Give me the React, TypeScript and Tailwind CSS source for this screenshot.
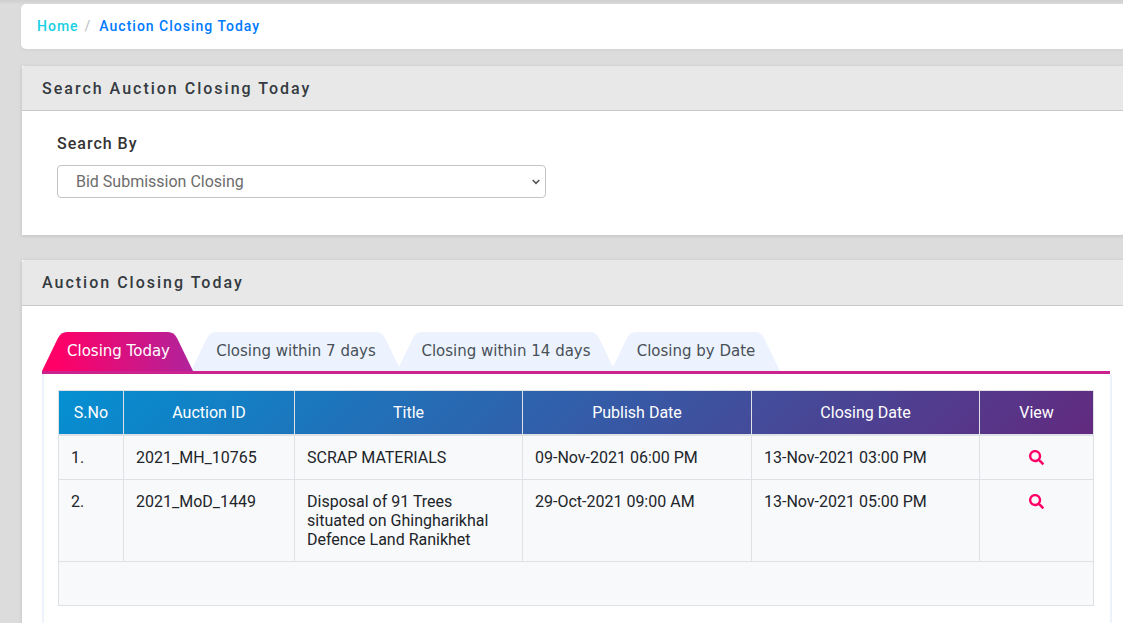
import { FaSearch } from 'react-icons/fa'

const tabs = [
  { label: 'Closing Today', width: 151, margin: 'ml-0 pl-[2px]', active: true },
  { label: 'Closing within 7 days', width: 210, margin: '-ml-[2px]', active: false },
  { label: 'Closing within 14 days', width: 218, margin: '-ml-[4px]', active: false },
  { label: 'Closing by Date', width: 169, margin: '-ml-[4px] pl-[1px]', active: false },
]

const rows = [
  { no: '1.', id: '2021_MH_10765', title: 'SCRAP MATERIALS', publish: '09-Nov-2021 06:00 PM', closing: '13-Nov-2021 03:00 PM' },
  {
    no: '2.',
    id: '2021_MoD_1449',
    title: 'Disposal of 91 Trees situated on Ghingharikhal Defence Land Ranikhet',
    publish: '29-Oct-2021 09:00 AM',
    closing: '13-Nov-2021 05:00 PM',
  },
]

function Tab({ label, width, margin, active }: { label: string; width: number; margin: string; active: boolean }) {
  const h = 39
  const d = `M0 ${h} L${16} 6 Q19 0 25 0 L${width - 25} 0 Q${width - 19} 0 ${width - 16} 6 L${width} ${h} Z`
  const gid = 'tab-grad-' + width
  return (
    <div
      className={`relative flex h-[39px] items-start justify-center pt-[8px] leading-[22px] ${margin} ${active ? 'z-10 text-white' : 'text-[#495057]'}`}
      style={{ width }}
    >
      <svg className="absolute inset-0" width={width} height={h} viewBox={`0 0 ${width} ${h}`}>
        <defs>
          <linearGradient id={gid} x1="0" y1="0" x2="1" y2="0">
            <stop offset="0.1" stopColor="#ff0066" />
            <stop offset="1" stopColor="#b0239c" />
          </linearGradient>
        </defs>
        <path d={d} fill={active ? `url(#${gid})` : '#ecf3fe'} />
      </svg>
      <span className="relative font-['DejaVu_Sans',sans-serif] text-[15px]">{label}</span>
    </div>
  )
}

export default function App() {
  return (
    <div className="h-[623px] w-[1123px] overflow-hidden bg-[#dcdcdc] font-['Roboto',sans-serif]">
      <div className="h-[4px] bg-gradient-to-b from-[#cfcfcf] to-[#dadada]" />
      <div className="ml-[21px] w-[1140px]">
        {/* breadcrumb */}
        <div className="flex h-[45px] items-center rounded-l-[5px] bg-white pl-[16px] text-[14px] font-medium tracking-[1px] shadow-[0_1px_3px_rgba(0,0,0,0.05)]">
          <span className="text-[#17d0e3]">Home</span>
          <span className="ml-[6px] font-normal text-[#b9bdc1]">/</span>
          <span className="ml-[8px] text-[#007bff]">Auction Closing Today</span>
        </div>

        {/* search card */}
        <div className="ml-px mt-[17px] h-[169px] bg-white shadow-[0_1px_4px_rgba(0,0,0,0.12)]">
          <div className="flex h-[45px] items-center rounded-tl-[3px] border-b border-[#c6cacd] bg-[#e8e8e8] pl-[20px] pt-[1px] text-[16px] font-medium tracking-[2px] text-[#343a40]">
            Search Auction Closing Today
          </div>
          <div className="pl-[35px] pt-[23px]">
            <div className="text-[16px] font-medium leading-[20px] tracking-[1px] text-[#333333]">Search By</div>
            <div className="relative mt-[11px] h-[33px] w-[489px]">
              <select className="h-[33px] w-full appearance-none rounded-[4px] border border-[#c4c4c4] bg-white pl-[18px] text-[16px] text-[#6c6c6c]">
                <option>Bid Submission Closing</option>
              </select>
              <svg className="pointer-events-none absolute left-[475px] top-[14px]" width="8" height="6" viewBox="0 0 8 6">
                <path d="M0.7 1 L4 4.4 L7.3 1" fill="none" stroke="#555555" strokeWidth="1.6" />
              </svg>
            </div>
          </div>
        </div>

        {/* results card */}
        <div className="ml-px mt-[25px] h-[400px] bg-white shadow-[0_1px_4px_rgba(0,0,0,0.12)]">
          <div className="flex h-[46px] items-center rounded-tl-[3px] border-b border-[#c6cacd] bg-[#e8e8e8] pl-[20px] text-[16px] font-medium tracking-[2px] text-[#343a40]">
            Auction Closing Today
          </div>
          <div className="pl-[20px] pt-[26px]">
            <div className="flex">
              {tabs.map((t) => (
                <Tab key={t.label} {...t} />
              ))}
            </div>
            <div className="h-[3px] w-[1068px] bg-[#cb2290]" />
            <div className="h-[300px] w-[1070px] border-x-[2px] border-x-[#eef3fb] pl-[14px] pt-[16px]">
              <table className="w-[1035px] table-fixed border-collapse border border-[#dee2e6] bg-[#f8f9fb] text-[16px] leading-[19px] text-[#212529]">
                <colgroup>
                  <col className="w-[65px]" />
                  <col className="w-[171px]" />
                  <col className="w-[228px]" />
                  <col className="w-[229px]" />
                  <col className="w-[228px]" />
                  <col className="w-[114px]" />
                </colgroup>
                <thead className="bg-[linear-gradient(135deg,#0490d2,#622a7f)]">
                  <tr className="h-[44px] border-b-[2px] border-[#dee2e6] text-white">
                    {['S.No', 'Auction ID', 'Title', 'Publish Date', 'Closing Date', 'View'].map((h) => (
                      <th key={h} className="border-x border-[#dee2e6] text-center font-normal">
                        {h}
                      </th>
                    ))}
                  </tr>
                </thead>
                <tbody>
                  {rows.map((r) => (
                    <tr key={r.no} className="border-b border-[#dee2e6]">
                      <td className="border-x border-[#dee2e6] p-[12px] align-top">{r.no}</td>
                      <td className="border-x border-[#dee2e6] p-[12px] align-top">{r.id}</td>
                      <td className="border-x border-[#dee2e6] p-[12px] align-top">{r.title}</td>
                      <td className="border-x border-[#dee2e6] p-[12px] align-top">{r.publish}</td>
                      <td className="border-x border-[#dee2e6] p-[12px] align-top">{r.closing}</td>
                      <td className="border-x border-[#dee2e6] p-[12px] align-top">
                        <div className="flex h-[19px] items-center justify-center">
                          <FaSearch className="text-[15px] text-[#ff0066]" />
                        </div>
                      </td>
                    </tr>
                  ))}
                  <tr className="h-[44px]">
                    <td colSpan={6} />
                  </tr>
                </tbody>
              </table>
            </div>
          </div>
        </div>
      </div>
    </div>
  )
}
